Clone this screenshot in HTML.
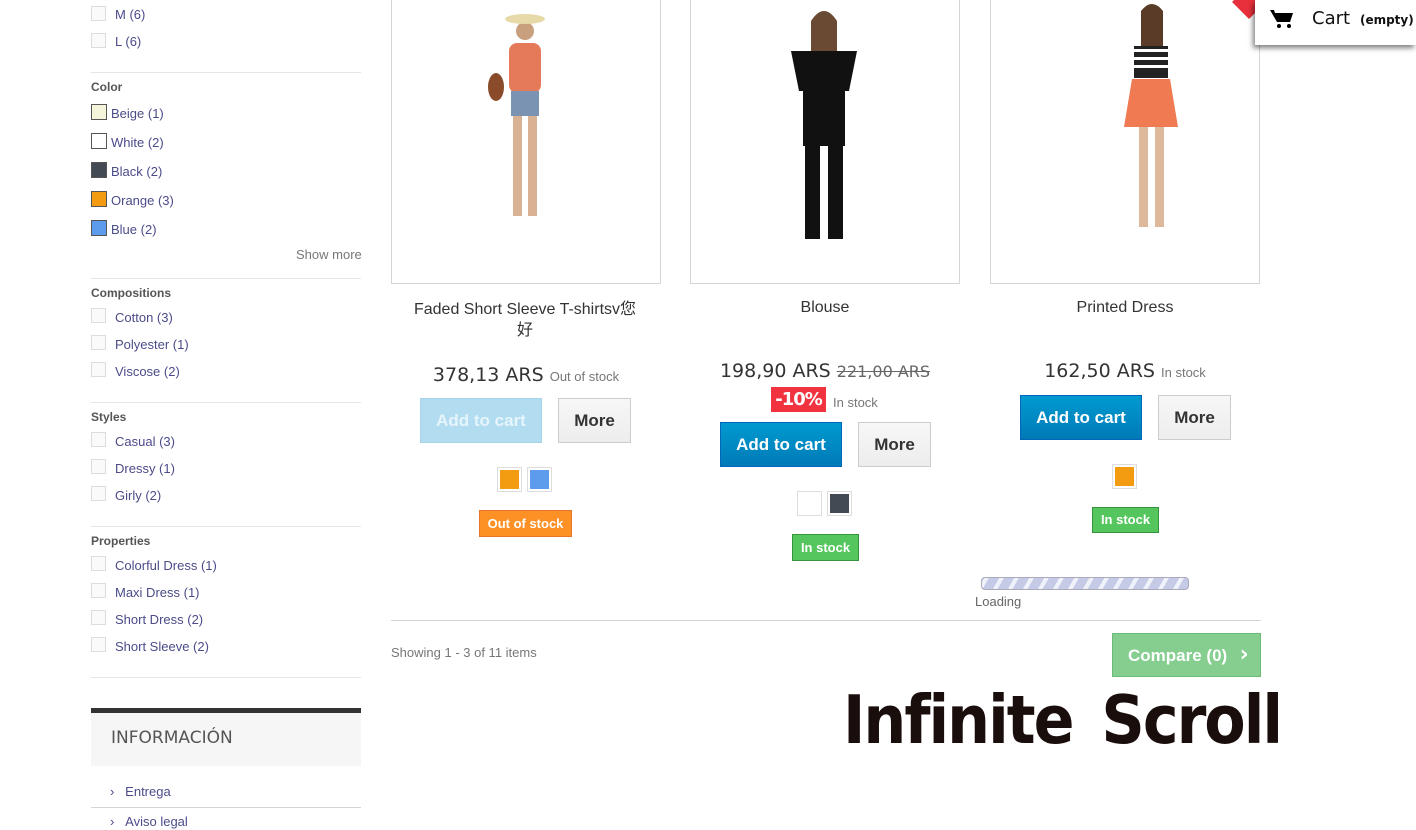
<!DOCTYPE html>
<html><head><meta charset="utf-8"><style>
*{box-sizing:border-box;margin:0;padding:0}
body{width:1416px;height:830px;overflow:hidden;background:#fff;font-family:"Liberation Sans",Arial,sans-serif;position:relative;color:#333}
.a{position:absolute}
.cb{position:absolute;width:15px;height:15px;border:1px solid #ddd;background:#fafafa}
.lk{position:absolute;font-size:13px;color:#4b4b8a}
.sw{position:absolute;width:16px;height:16px;border:1px solid #555}
.h{position:absolute;font-size:12px;font-weight:bold;color:#555}
.hr{position:absolute;height:1px;background:#e6e6e6;left:91px;width:270px}
.img{position:absolute;border:1px solid #d6d4d4;background:#fff;top:-10px;height:294px;width:270px}
.name{position:absolute;font-size:16px;color:#333;text-align:center;width:270px}
.price{position:absolute;font-family:"DejaVu Sans",sans-serif;font-size:19px;color:#333;width:270px;text-align:center;white-space:nowrap}
.price small{font-family:"Liberation Sans";font-size:13px;color:#777}
.add{position:absolute;width:122px;height:45px;background:linear-gradient(#009ad0,#007ab7);border:1px solid #06b;color:#fff;font-weight:bold;font-size:17px;text-align:center;line-height:43px}
.more{position:absolute;width:73px;height:45px;background:linear-gradient(#f7f7f7,#ededed);border:1px solid #ccc;color:#333;font-weight:bold;font-size:17px;text-align:center;line-height:43px}
.ps{position:absolute;width:25px;height:25px;border:1px solid #ddd;padding:2px}
.ps div{width:100%;height:100%}
.lab{position:absolute;color:#fff;font-weight:bold;font-size:13px;text-align:center}
</style></head><body>

<div class="cb" style="left:91px;top:6px"></div><div class="lk" style="left:115px;top:7px">M (6)</div>
<div class="cb" style="left:91px;top:33px"></div><div class="lk" style="left:115px;top:34px">L (6)</div>
<div class="hr" style="top:72px"></div>
<div class="h" style="left:91px;top:80px">Color</div>
<div class="sw" style="left:91px;top:104px;background:#f5f5dc"></div><div class="lk" style="left:111px;top:106px">Beige (1)</div>
<div class="sw" style="left:91px;top:133px;background:#fff"></div><div class="lk" style="left:111px;top:135px">White (2)</div>
<div class="sw" style="left:91px;top:162px;background:#434a54"></div><div class="lk" style="left:111px;top:164px">Black (2)</div>
<div class="sw" style="left:91px;top:191px;background:#f39c11"></div><div class="lk" style="left:111px;top:193px">Orange (3)</div>
<div class="sw" style="left:91px;top:220px;background:#5d9cec"></div><div class="lk" style="left:111px;top:222px">Blue (2)</div>
<div class="a" style="left:296px;top:247px;font-size:13px;color:#777">Show more</div>
<div class="hr" style="top:278px"></div>
<div class="h" style="left:91px;top:286px">Compositions</div>
<div class="cb" style="left:91px;top:308px"></div><div class="lk" style="left:115px;top:310px">Cotton (3)</div>
<div class="cb" style="left:91px;top:335px"></div><div class="lk" style="left:115px;top:337px">Polyester (1)</div>
<div class="cb" style="left:91px;top:362px"></div><div class="lk" style="left:115px;top:364px">Viscose (2)</div>
<div class="hr" style="top:402px"></div>
<div class="h" style="left:91px;top:410px">Styles</div>
<div class="cb" style="left:91px;top:432px"></div><div class="lk" style="left:115px;top:434px">Casual (3)</div>
<div class="cb" style="left:91px;top:459px"></div><div class="lk" style="left:115px;top:461px">Dressy (1)</div>
<div class="cb" style="left:91px;top:486px"></div><div class="lk" style="left:115px;top:488px">Girly (2)</div>
<div class="hr" style="top:526px"></div>
<div class="h" style="left:91px;top:534px">Properties</div>
<div class="cb" style="left:91px;top:556px"></div><div class="lk" style="left:115px;top:558px">Colorful Dress (1)</div>
<div class="cb" style="left:91px;top:583px"></div><div class="lk" style="left:115px;top:585px">Maxi Dress (1)</div>
<div class="cb" style="left:91px;top:610px"></div><div class="lk" style="left:115px;top:612px">Short Dress (2)</div>
<div class="cb" style="left:91px;top:637px"></div><div class="lk" style="left:115px;top:639px">Short Sleeve (2)</div>
<div class="hr" style="top:677px"></div>
<div class="a" style="left:91px;top:708px;width:270px;height:58px;background:#f6f6f6;border-top:5px solid #333"></div>
<div class="a" style="left:111px;top:728px;font-family:'DejaVu Sans',sans-serif;font-size:17px;color:#555">INFORMACIÓN</div>
<div class="a" style="left:110px;top:784px;font-size:13px;color:#4b4b8a">›&nbsp;&nbsp;&nbsp;Entrega</div>
<div class="hr" style="top:807px;background:#d6d4d4"></div>
<div class="a" style="left:110px;top:814px;font-size:13px;color:#4b4b8a">›&nbsp;&nbsp;&nbsp;Aviso legal</div>

<div class="img" style="left:391px"><svg width="268" height="292"><circle cx="133" cy="40" r="9" fill="#c9a07e"/><ellipse cx="133" cy="28" rx="20" ry="5" fill="#e8d9a8"/><rect x="117" y="52" width="32" height="50" rx="8" fill="#e57a5b"/><rect x="119" y="100" width="28" height="25" fill="#7b93b3"/><rect x="121" y="125" width="9" height="100" fill="#d9b294"/><rect x="136" y="125" width="9" height="100" fill="#d9b294"/><ellipse cx="104" cy="96" rx="8" ry="14" fill="#8a4b2b"/></svg></div>
<div class="img" style="left:690px"><svg width="268" height="292"><circle cx="133" cy="42" r="10" fill="#d7b196"/><path d="M120 30 q13-20 26 0 v30 h-26z" fill="#6b4a33"/><path d="M100 60 h66 l-8 40 h-50z" fill="#111"/><rect x="112" y="95" width="42" height="60" fill="#111"/><rect x="114" y="150" width="15" height="98" fill="#111"/><rect x="137" y="150" width="15" height="98" fill="#111"/></svg></div>
<div class="img" style="left:990px"><svg width="268" height="292"><circle cx="161" cy="30" r="9" fill="#d9b294"/><path d="M150 20 q11-14 22 0 v40 h-22z" fill="#5a3b28"/><rect x="143" y="55" width="34" height="32" fill="#222"/><rect x="143" y="58" width="34" height="3" fill="#fff"/><rect x="143" y="66" width="34" height="3" fill="#fff"/><rect x="143" y="74" width="34" height="3" fill="#fff"/><path d="M141 88 h38 l8 48 h-54z" fill="#f07a52"/><rect x="148" y="136" width="9" height="100" fill="#ddb89b"/><rect x="164" y="136" width="9" height="100" fill="#ddb89b"/></svg></div>

<div class="name" style="left:390px;top:299px;line-height:21px;font-family:'Liberation Sans','Noto Sans CJK SC',sans-serif">Faded Short Sleeve T-shirtsv您<br>好</div>
<div class="name" style="left:690px;top:299px">Blouse</div>
<div class="name" style="left:990px;top:299px">Printed Dress</div>

<div class="price" style="left:391px;top:364px">378,13 ARS <small>Out of stock</small></div>
<div class="price" style="left:690px;top:360px">198,90 ARS <span style="font-size:16px;color:#666;text-decoration:line-through">221,00 ARS</span></div>
<div class="a" style="left:771px;top:387px;width:55px;height:25px;background:#f13340;color:#fff;font-family:'DejaVu Sans',sans-serif;font-size:18px;font-weight:bold;text-align:center;line-height:25px;letter-spacing:-1px">-10%</div>
<div class="a" style="left:833px;top:395px;font-size:13px;color:#777">In stock</div>
<div class="price" style="left:990px;top:360px">162,50 ARS <small>In stock</small></div>

<div class="add" style="left:420px;top:398px;background:#b2ddf0;border-color:#a8d4ea;color:#e6f4fb">Add to cart</div>
<div class="more" style="left:558px;top:398px">More</div>
<div class="add" style="left:720px;top:422px">Add to cart</div>
<div class="more" style="left:858px;top:422px">More</div>
<div class="add" style="left:1020px;top:395px">Add to cart</div>
<div class="more" style="left:1158px;top:395px">More</div>

<div class="ps" style="left:497px;top:467px"><div style="background:#f39c11"></div></div>
<div class="ps" style="left:527px;top:467px"><div style="background:#5d9cec"></div></div>
<div class="ps" style="left:797px;top:491px"><div style="background:#fff"></div></div>
<div class="ps" style="left:827px;top:491px"><div style="background:#434a54"></div></div>
<div class="ps" style="left:1112px;top:464px"><div style="background:#f39c11"></div></div>

<div class="lab" style="left:479px;top:510px;width:93px;height:27px;line-height:25px;background:#fe9126;border:1px solid #e4752b">Out of stock</div>
<div class="lab" style="left:792px;top:534px;width:67px;height:27px;line-height:25px;background:#55c65e;border:1px solid #36943e">In stock</div>
<div class="lab" style="left:1092px;top:507px;width:67px;height:26px;line-height:24px;background:#55c65e;border:1px solid #36943e">In stock</div>

<div class="a" style="left:981px;top:577px;width:208px;height:13px;border:1px solid #aab;border-radius:4px;background:repeating-linear-gradient(-60deg,#c5cbe6 0 9px,#f0f2fa 9px 13px)"></div>
<div class="a" style="left:975px;top:594px;font-size:13px;color:#666">Loading</div>

<div class="a" style="left:391px;top:620px;width:870px;height:1px;background:#d6d4d4"></div>
<div class="a" style="left:391px;top:645px;font-size:13px;color:#777">Showing 1 - 3 of 11 items</div>
<div class="a" style="left:1112px;top:633px;width:149px;height:44px;background:#85ce90;border:1px solid #6bbd76;color:#fff;font-weight:bold;font-size:17px;line-height:42px;padding-left:15px">Compare (0) <span style="font-family:'DejaVu Sans';font-weight:bold;font-size:22px">&nbsp;›</span></div>

<div class="a" style="left:843px;top:681px;font-family:'DejaVu Sans Condensed','DejaVu Sans',sans-serif;font-weight:bold;font-size:67px;color:#1a0e0c;letter-spacing:-2px;word-spacing:10px;white-space:nowrap">Infinite Scroll</div>

<div class="a" style="left:1237px;top:-10px;width:24px;height:24px;background:#e8303c;transform:rotate(45deg)"></div>
<div class="a" style="left:1255px;top:0;width:161px;height:45px;background:#fff;box-shadow:-2px 3px 5px rgba(0,0,0,.5)"></div>
<svg class="a" style="left:1270px;top:9px" width="24" height="20" viewBox="0 0 24 20"><path d="M0 1h4l1 3h18l-3 9H7z" fill="#000"/><circle cx="9" cy="17" r="2" fill="#000"/><circle cx="19" cy="17" r="2" fill="#000"/></svg>
<div class="a" style="left:1312px;top:8px;font-family:'DejaVu Sans',sans-serif;font-size:18px;color:#111">Cart <span style="font-size:12px;font-weight:bold">&nbsp;(empty)</span></div>
</body></html>
